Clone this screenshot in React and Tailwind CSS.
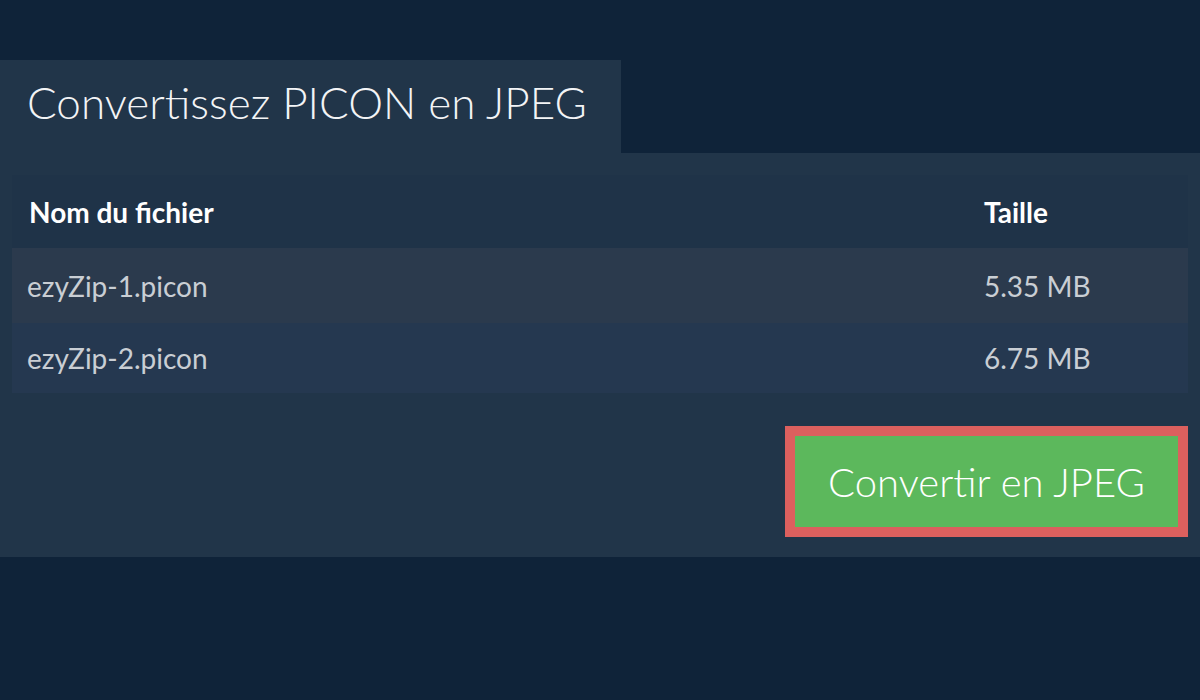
export default function App() {
  return (
    <div className="w-[1200px] h-[700px] bg-[#0f2339] pt-[60px]" style={{ fontFamily: 'Lato, "Noto Sans", sans-serif' }}>
      <div className="w-[621px] h-[93px] bg-[#213549] flex items-center pl-[27px] pb-[10px]">
        <h1 className="text-[44px] font-light text-[#f3f4f6] leading-none">Convertissez PICON en JPEG</h1>
      </div>
      <div className="bg-[#213549] px-[12px] pt-[22px] pb-[20px]">
        <div className="w-full">
          <div className="flex h-[73px] items-center bg-[#1f3348] text-white font-bold text-[28px]">
            <div className="flex-1 pl-[17px]">Nom du fichier</div>
            <div className="w-[204px]">Taille</div>
          </div>
          <div className="flex h-[75px] items-center bg-[#2b3a4d] text-[#c9ced4] text-[28px]">
            <div className="flex-1 pl-[15px]">ezyZip-1.picon</div>
            <div className="w-[204px]">5.35 MB</div>
          </div>
          <div className="flex h-[70px] items-center bg-[#253850] text-[#c9ced4] text-[28px]">
            <div className="flex-1 pl-[15px]">ezyZip-2.picon</div>
            <div className="w-[204px]">6.75 MB</div>
          </div>
        </div>
        <div className="flex justify-end mt-[33px]">
          <button className="w-[403px] h-[111px] border-[10px] border-[#dc605e] bg-[#5cb85c] text-white font-light text-[40px] flex items-center justify-center">
            Convertir en JPEG
          </button>
        </div>
      </div>
    </div>
  );
}
